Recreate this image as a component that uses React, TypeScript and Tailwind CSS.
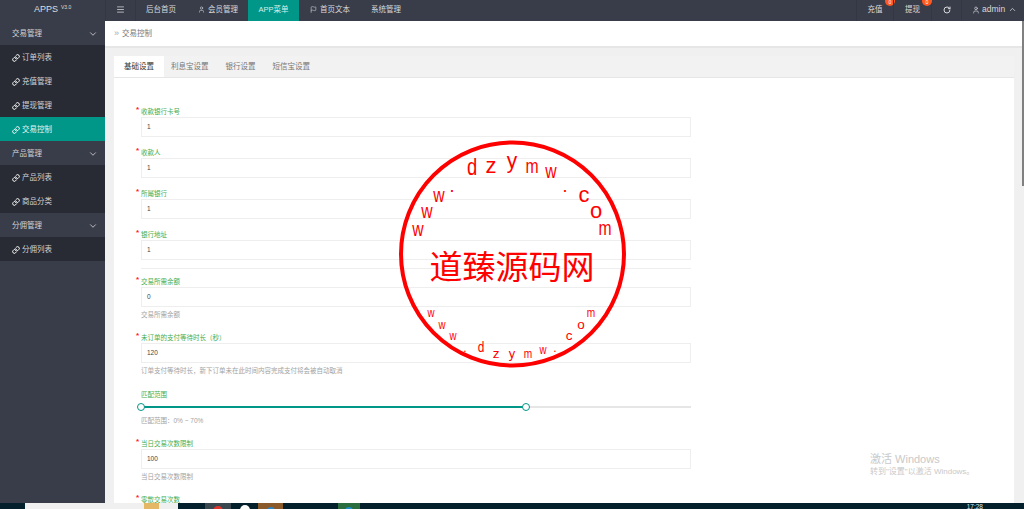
import { ChevronDown, ChevronUp, Flag, Link as LinkIcon, Menu, RotateCw, User } from 'lucide-react';

const sideGroups = [
  { title: '交易管理', items: ['订单列表', '充值管理', '提现管理', '交易控制'] },
  { title: '产品管理', items: ['产品列表', '商品分类'] },
  { title: '分佣管理', items: ['分佣列表'] },
];

// letter, x, baseline, font size, horizontal squeeze
const ringTop = [
  ['w', 418, 236, 21, 0.75], ['w', 427, 218, 21, 0.75], ['w', 439, 202, 21, 0.75], ['.', 452, 192, 18, 1],
  ['d', 472, 175, 23, 0.8], ['z', 491, 172.5, 22, 1], ['y', 512, 168, 22, 0.95], ['m', 532, 172.5, 21, 0.75],
  ['w', 551, 178, 21, 0.75], ['.', 565, 192, 18, 1], ['c', 584, 201.5, 22, 1], ['o', 596, 217.5, 22, 1], ['m', 605, 235, 21, 0.75],
] as const;

const ringBottom = [
  ['w', 431, 316.5, 13, 0.75], ['w', 442, 329, 13, 0.75], ['w', 453, 340, 13, 0.75], ['.', 465, 352, 12, 1],
  ['d', 481, 352, 14, 0.85], ['z', 496, 358, 13.5, 1], ['y', 512, 357.5, 13.5, 0.95], ['m', 528, 358, 13.5, 0.75],
  ['w', 543, 354, 13, 0.75], ['.', 555, 352, 12, 1], ['c', 569, 340, 13.5, 1], ['o', 581, 329, 13.5, 1], ['m', 591, 316.5, 13.5, 0.75],
] as const;

function Field({ label, value, hint, hintGap = 'mt-[4px]', mb = 'mb-[12px]' }: { label: string; value: string; hint?: string; hintGap?: string; mb?: string }) {
  return (
    <div className={mb}>
      <div className="relative h-[8px] text-[6.5px] leading-[8px] text-[#45ad4c]">
        <span className="absolute left-[-5px] top-[-2px] text-[8px] font-bold text-[#ff2222]">*</span>
        {label}
      </div>
      <div className="mt-[1px] flex h-[20px] w-[550px] items-center border border-[#eeeeee] bg-white pl-[5px] text-[6.5px] text-[#444444]">
        {value}
      </div>
      {hint && <div className={`${hintGap} h-[8px] text-[6.5px] leading-[8px] text-[#a3a3a3]`}>{hint}</div>}
    </div>
  );
}

function Stamp() {
  return (
    <svg className="absolute left-[395px] top-[137px]" width="234" height="234" viewBox="395 137 234 234" fill="#ff0000">
      <circle cx="512.5" cy="254" r="111.5" fill="none" stroke="#ff0000" strokeWidth="4" />
      <text x="512" y="279" textAnchor="middle" fontSize="33" fontFamily="'Noto Sans CJK SC', sans-serif">
        道臻源码网
      </text>
      {[...ringTop, ...ringBottom].map(([ch, x, y, size, squeeze], i) => (
        <text
          key={i}
          transform={`translate(${x} ${y}) scale(${squeeze} 1)`}
          textAnchor="middle"
          fontSize={size}
          fontFamily="'Liberation Sans', sans-serif"
        >
          {ch}
        </text>
      ))}
    </svg>
  );
}

export default function App() {
  return (
    <div className="relative h-[509px] w-[1024px] overflow-hidden bg-[#f0f0f0] font-['Liberation_Sans','Noto_Sans_CJK_SC',sans-serif]">
      <header className="flex h-[21px] items-stretch bg-[#393d49] pb-[2px] text-[7.5px] text-[#d8d9dc]">
        <div className="flex w-[105px] items-center pl-[34px] text-[9px] text-[#dddddd]">
          APPS<sup className="ml-[3px] text-[5px]">V3.0</sup>
        </div>
        <div className="mb-[-2px] flex w-[31px] items-center justify-center border-x border-[#333743] pb-[2px]">
          <Menu size={9} />
        </div>
        <div className="flex w-[52px] items-center pl-[10px]">后台首页</div>
        <div className="flex w-[60px] items-center pl-[10px]">
          <User size={7} className="mr-[3px] shrink-0" />
          <span className="shrink-0">会员管理</span>
        </div>
        <div className="mb-[-2px] flex w-[51px] items-center justify-center bg-[#009688] pb-[2px] text-[#d5efec]">APP菜单</div>
        <div className="flex w-[61px] items-center pl-[11px]">
          <Flag size={7} className="mr-[3px] shrink-0" />
          <span className="shrink-0">首页文本</span>
        </div>
        <div className="flex items-center pl-[11px]">系统管理</div>
        <div className="ml-auto flex items-stretch">
          <div className="relative mb-[-2px] flex w-[37px] items-center justify-center border-l border-[#333743] pb-[2px]">
            充值
            <span className="absolute right-[-2px] top-[-4px] flex size-[10px] items-center justify-center rounded-full bg-[#ff5722] pt-[3px] text-[5px] leading-[5px] text-white">0</span>
          </div>
          <div className="relative mb-[-2px] flex w-[38px] items-center justify-center border-l border-[#333743] pb-[2px]">
            提现
            <span className="absolute right-[-1px] top-[-4px] flex size-[10px] items-center justify-center rounded-full bg-[#ff5722] pt-[3px] text-[5px] leading-[5px] text-white">0</span>
          </div>
          <div className="mb-[-2px] flex w-[31px] items-center justify-center border-x border-[#333743] pb-[2px]">
            <RotateCw size={8} strokeWidth={3} />
          </div>
          <div className="flex w-[62px] items-center pl-[10px]">
            <User size={8} className="mr-[2px]" />
            <span className="text-[8.5px]">admin</span>
            <ChevronUp size={9} className="ml-[3px]" />
          </div>
        </div>
      </header>

      <div className="flex h-[482px]">
        <aside className="w-[105px] shrink-0 bg-[#393d49] text-[7.5px] text-[#d2d3d6]">
          {sideGroups.map((group) => (
            <div key={group.title}>
              <div className="flex h-[24px] items-center justify-between pl-[12px] pr-[7px] pt-[1px]">
                {group.title}
                <ChevronDown size={10} />
              </div>
              {group.items.map((item) => (
                <div
                  key={item}
                  className={`flex h-[24px] items-center pl-[12px] pt-[1px] ${item === '交易控制' ? 'bg-[#009688] text-[#e6f5f3]' : 'bg-[#282b33]'}`}
                >
                  <LinkIcon size={8} strokeWidth={3} className="mr-[2px] text-white" />
                  {item}
                </div>
              ))}
            </div>
          ))}
        </aside>

        <main className="min-w-0 flex-1">
          <div className="flex h-[27px] items-center border-b-2 border-[#e6e6e6] bg-white pl-[9px] text-[7.5px] text-[#777777]">
            <span className="mr-[3px] text-[9px] leading-[9px] text-[#aaaaaa]">»</span>交易控制
          </div>
          <div className="ml-[9px] mr-[10px] mt-[8px] bg-white">
            <div className="flex h-[22px] items-stretch border-b border-[#e6e6e6] bg-[#f2f2f2] text-[7.5px] text-[#777777]">
              <div className="flex w-[50px] items-center justify-center bg-white text-[#333333]">基础设置</div>
              <div className="flex items-center pl-[7px]">利息宝设置</div>
              <div className="flex items-center pl-[17px]">银行设置</div>
              <div className="flex items-center pl-[17px]">短信宝设置</div>
            </div>
            <div className="pl-[27px] pt-[30px]">
              <Field label="收款银行卡号" value="1" />
              <Field label="收款人" value="1" />
              <Field label="所屬银行" value="1" />
              <Field label="银行地址" value="1" mb="mb-[8px]" />
              <div className="mb-[9px] h-px w-[550px] bg-[#eeeeee]" />
              <Field label="交易所需余额" value="0" hint="交易所需余额" mb="mb-[15px]" />
              <Field
                label="未订单的支付等待时长（秒）"
                value="120"
                hint="订单支付等待时长，新下订单未在此时间内容完成支付将会被自动取消"
                mb="mb-[16px]"
              />
              <div className="mb-[15px]">
                <div className="h-[8px] text-[6.5px] leading-[8px] text-[#45ad4c]">匹配范围</div>
                <div className="relative mt-[4px] h-[8px] w-[550px]">
                  <div className="absolute inset-x-0 top-[3px] h-[2px] bg-[#e6e6e6]" />
                  <div className="absolute left-0 top-[3px] h-[2px] w-[385px] bg-[#009688]" />
                  <span className="absolute left-[-4px] top-0 size-[8px] rounded-full border-[1.5px] border-[#009688] bg-white" />
                  <span className="absolute left-[381px] top-0 size-[8px] rounded-full border-[1.5px] border-[#009688] bg-white" />
                </div>
                <div className="mt-[6px] h-[8px] text-[6.5px] leading-[8px] text-[#a3a3a3]">匹配范围：0% ~ 70%</div>
              </div>
              <Field label="当日交易次数限制" value="100" hint="当日交易次数限制" mb="mb-[15px]" />
              <Field label="零散交易次数" value="" />
            </div>
          </div>
        </main>
      </div>

      <Stamp />

      <div className="absolute left-[870px] top-[453px] text-[#c9c9c9]">
        <div className="text-[11px] leading-[13px]">激活 Windows</div>
        <div className="text-[8px] leading-[11px]">转到"设置"以激活 Windows。</div>
      </div>

      <div className="absolute right-0 top-[21px] h-[482px] w-[2px] bg-[#f0f0f0]">
        <div className="h-[165px] w-[2px] bg-[#808080]" />
      </div>

      <footer className="absolute inset-x-0 bottom-0 flex h-[6px] items-start overflow-hidden bg-[#03202c]">
        <div className="ml-[25px] h-[6px] w-[153px] bg-[#f0f0f0] pl-[119px]">
          <div className="h-[6px] w-[15px] bg-[#e3b765]" />
        </div>
        <div className="ml-[27px] flex h-[6px] w-[26px] justify-center bg-[#39474f]">
          <span className="mt-[3px] size-[10px] shrink-0 rounded-full bg-[#e0352b]" />
        </div>
        <div className="flex h-[6px] w-[27px] justify-center">
          <span className="mt-[2px] size-[10px] shrink-0 rounded-full bg-white" />
        </div>
        <div className="flex h-[6px] w-[25px] justify-center bg-[#8b5a2b]">
          <span className="mt-[4px] size-[8px] shrink-0 rounded-full bg-[#2a86c8]" />
        </div>
        <div className="ml-[55px] flex h-[6px] w-[22px] justify-center bg-[#2a6e3f]">
          <span className="mt-[4px] size-[8px] shrink-0 rounded-full bg-[#1d8fd0]" />
        </div>
        <div className="ml-auto mr-[41px] text-[6.5px] leading-[8px] text-[#dfe6ea]">17:28</div>
      </footer>
    </div>
  );
}
